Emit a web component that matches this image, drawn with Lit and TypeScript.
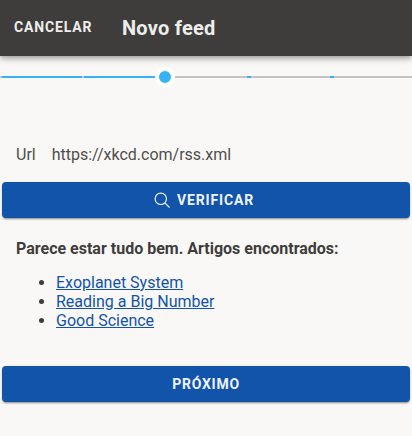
import { LitElement, html, css } from "lit";
import { customElement } from "lit/decorators.js";

@customElement("app-root")
export class AppRoot extends LitElement {
  static styles = css`
    :host { display: flex; flex-direction: column; width: 412px; height: 436px; background: #f9f8f6; font-family: Roboto, "Liberation Sans", sans-serif; color: #3e3d3b; overflow: hidden; }
    header { height: 56px; flex: none; background: #3e3d3b; color: #eeedeb; display: flex; align-items: center; box-shadow: 0 2px 4px -1px rgba(0,0,0,.2), 0 4px 5px 0 rgba(0,0,0,.14), 0 1px 10px 0 rgba(0,0,0,.12); }
    .cancel { font-size: 14px; font-weight: 700; letter-spacing: .85px; margin-left: 14px; width: 108px; margin-top: -2px; }
    h1 { margin: 0; font-size: 20px; font-weight: 700; letter-spacing: .25px; }
    .stepper { display: flex; align-items: center; height: 20px; margin-top: 11px; flex: none; }
    .seg { height: 2px; flex: none; }
    .on { background: #35b3f5; }
    .off { background: #c4c3c1; }
    .thumb { width: 12px; height: 12px; border-radius: 50%; background: #35b3f5; border: 4px solid #fff; flex: none; }
    .url { display: flex; gap: 16px; margin: 58px 0 0 16px; font-size: 16px; line-height: 20px; color: #4f4e4c; }
    button { display: flex; align-items: center; justify-content: center; gap: 7px; border: 0; width: 408px; height: 36px; margin: 0 2px; flex: none; background: #1254aa; color: #eef3fa; border-radius: 4px; font: 700 14px Roboto, sans-serif; letter-spacing: .75px; box-shadow: 0 2px 2px -1px rgba(0,0,0,.35), 0 1px 3px rgba(0,0,0,.15); padding: 0; }
    .verify { margin-top: 17px; padding-right: 4px; box-sizing: border-box; letter-spacing: .85px; }
    svg { display: block; }
    p { margin: 21px 0 0 16px; font-size: 16px; line-height: 19px; font-weight: 700; }
    ul { margin: 15px 0 0; padding: 0 0 0 56px; font-size: 16px; line-height: 19px; }
    a { color: #1254aa; text-decoration: underline; }
    .next { margin-top: 36px; }
  `;

  render() {
    const segs: [string, number][] = [["off",2],["on",80],["off",2],["on",71]];
    const after: [string, number][] = [["off",72],["on",4],["off",79],["on",4],["off",78]];
    const seg = ([c, w]: [string, number]) => html`<div class="seg ${c}" style="width:${w}px"></div>`;
    return html`
      <header><div class="cancel">CANCELAR</div><h1>Novo feed</h1></header>
      <div class="stepper">${segs.map(seg)}<div class="thumb"></div>${after.map(seg)}</div>
      <div class="url"><span>Url</span><span>https://xkcd.com/rss.xml</span></div>
      <button class="verify">
        <svg width="16" height="16" viewBox="0 0 16 16" fill="none" stroke="#eef3fa" stroke-width="1.2"><circle cx="6.8" cy="6.8" r="5.7"/><path d="M10.9 10.9 15.5 15.5"/></svg>
        <span>VERIFICAR</span>
      </button>
      <p>Parece estar tudo bem. Artigos encontrados:</p>
      <ul>
        <li><a href="#">Exoplanet System</a></li>
        <li><a href="#">Reading a Big Number</a></li>
        <li><a href="#">Good Science</a></li>
      </ul>
      <button class="next">PRÓXIMO</button>
    `;
  }
}
